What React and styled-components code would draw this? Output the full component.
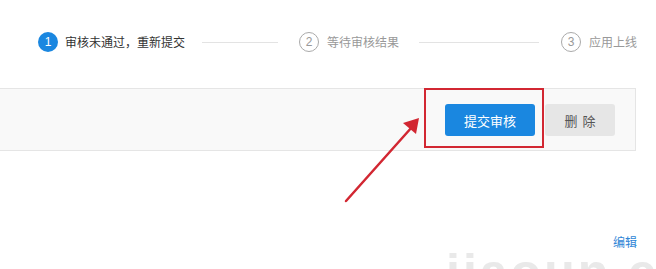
import React from "react";
import styled, { createGlobalStyle } from "styled-components";

const GlobalStyle = createGlobalStyle`
  html, body {
    margin: 0;
    padding: 0;
    background: #fff;
    overflow: hidden;
  }
  body {
    font-family: "Noto Sans CJK SC", "Liberation Sans", sans-serif;
  }
`;

const Page = styled.div`
  position: relative;
  width: 656px;
  height: 269px;
  overflow: hidden;
  background: #fff;
`;

const Steps = styled.div`
  display: flex;
  align-items: center;
  height: 20px;
  padding: 32px 0 0 38px;
`;

const Circle = styled.span`
  box-sizing: border-box;
  width: 20px;
  height: 20px;
  border-radius: 50%;
  display: inline-flex;
  align-items: center;
  justify-content: center;
  font-family: "Liberation Sans", sans-serif;
  font-size: 12px;
  flex-shrink: 0;
  background: ${(p) => (p.$active ? "#1a87e0" : "#fff")};
  color: ${(p) => (p.$active ? "#fff" : "#999")};
  border: ${(p) => (p.$active ? "none" : "1px solid #aaa")};
  margin-right: ${(p) => (p.$active ? "7px" : "8px")};
`;

const StepLabel = styled.span`
  font-size: 12px;
  line-height: 20px;
  white-space: nowrap;
  color: ${(p) => (p.$active ? "#333" : "#999")};
`;

const Line = styled.span`
  display: block;
  height: 1px;
  background: #e3e3e3;
  width: ${(p) => p.$w}px;
  margin: 0 ${(p) => p.$mr}px 0 ${(p) => p.$ml}px;
`;

const Panel = styled.div`
  box-sizing: border-box;
  margin-top: 36px;
  width: 636px;
  height: 63px;
  background: #f9f9f9;
  border: 1px solid #e5e5e5;
  border-left: none;
  display: flex;
  justify-content: flex-end;
  align-items: flex-start;
  gap: 10px;
  padding: 15px 20px 0 0;
`;

const Button = styled.button`
  height: 32px;
  width: ${(p) => p.$w}px;
  border: none;
  border-radius: 3px;
  font-family: "Noto Sans CJK SC", sans-serif;
  font-size: 13px;
  cursor: pointer;
  letter-spacing: ${(p) => (p.$spaced ? "5px" : "0")};
  text-indent: ${(p) => (p.$spaced ? "5px" : "0")};
  background: ${(p) => (p.$primary ? "#1a87e0" : "#e6e6e6")};
  color: ${(p) => (p.$primary ? "#fff" : "#555")};
`;

const Footer = styled.div`
  display: flex;
  justify-content: flex-end;
  padding: 83px 19px 0 0;
`;

const EditLink = styled.a`
  font-size: 12px;
  line-height: 16px;
  color: #2f86d6;
  text-decoration: none;
`;

const Highlight = styled.div`
  position: absolute;
  left: 424px;
  top: 88px;
  width: 120px;
  height: 60px;
  box-sizing: border-box;
  border: 2px solid #d22732;
  pointer-events: none;
`;

const ArrowSvg = styled.svg`
  position: absolute;
  left: 0;
  top: 0;
  pointer-events: none;
`;

const Watermark = styled.div`
  position: absolute;
  left: 446px;
  top: 247px;
  font-family: "Liberation Sans", sans-serif;
  font-weight: bold;
  font-size: 50px;
  line-height: 1;
  letter-spacing: 3px;
  color: #e9e9e9;
  white-space: nowrap;
  pointer-events: none;
`;

export default function App() {
  return (
    <>
      <GlobalStyle />
      <Page>
        <Steps>
          <Circle $active>1</Circle>
          <StepLabel $active>审核未通过，重新提交</StepLabel>
          <Line $w={76} $ml={17} $mr={21} />
          <Circle>2</Circle>
          <StepLabel>等待审核结果</StepLabel>
          <Line $w={120} $ml={20} $mr={22} />
          <Circle>3</Circle>
          <StepLabel>应用上线</StepLabel>
        </Steps>
        <Panel>
          <Button $primary $w={90}>提交审核</Button>
          <Button $w={70} $spaced>删除</Button>
        </Panel>
        <Footer>
          <EditLink href="#">编辑</EditLink>
        </Footer>
        <Watermark>jiaoun.cn</Watermark>
        <Highlight />
        <ArrowSvg width="656" height="269" viewBox="0 0 656 269">
          <line x1="346" y1="201" x2="412" y2="127" stroke="#d22732" strokeWidth="2.5" strokeLinecap="round" />
          <polygon points="419,118 416,134 403,123" fill="#d22732" />
        </ArrowSvg>
      </Page>
    </>
  );
}
